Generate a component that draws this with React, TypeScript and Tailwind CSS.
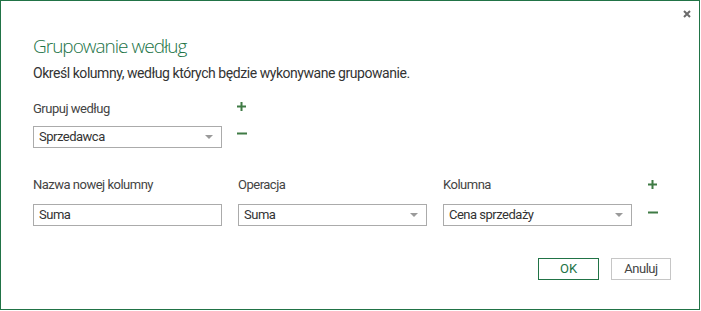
import { ReactNode } from "react"

const font = { fontFamily: 'Roboto, "Open Sans", sans-serif' }
const titleFont = { fontFamily: '"Open Sans", Roboto, sans-serif' }

const Plus = () => (
  <svg width="9" height="9" viewBox="0 0 9 9" className="block">
    <rect x="3.5" y="0" width="2" height="9" fill="#3f7b45" />
    <rect x="0" y="3.5" width="9" height="2" fill="#3f7b45" />
  </svg>
)

const Minus = () => (
  <svg width="10" height="9" viewBox="0 0 10 9" className="block">
    <rect x="0" y="3.5" width="10" height="2" fill="#3f7b45" />
  </svg>
)

const Arrow = () => (
  <svg width="8" height="4" viewBox="0 0 8 4" className="block">
    <path d="M0 0 L8 0 L4 4 Z" fill="#9a9a9a" />
  </svg>
)

const Label = ({ children }: { children: ReactNode }) => (
  <div className="h-[18px] text-[13px] leading-[18px] tracking-[-0.5px] text-[#444]">{children}</div>
)

const Select = ({ value }: { value: string }) => (
  <div className="flex h-[22px] w-[189px] items-center justify-between border border-[#ababab] pl-[5px] pr-[8px] text-[13px] tracking-[-0.5px] text-[#333]">
    <span>{value}</span>
    <Arrow />
  </div>
)

const Input = ({ value }: { value: string }) => (
  <div className="flex h-[22px] w-[189px] items-center border border-[#ababab] pl-[5px] text-[13px] tracking-[-0.5px] text-[#333]">
    {value}
  </div>
)

export default function App() {
  return (
    <div
      style={font}
      className="relative flex h-[310px] w-[700px] flex-col border border-[#217346] bg-white pl-[32px]"
    >
      <button className="absolute right-[8px] top-[9px] p-0">
        <svg width="8" height="8" viewBox="0 0 8 8" className="block">
          <path d="M1 1 L7 7 M7 1 L1 7" stroke="#6b6b6b" strokeWidth="2" />
        </svg>
      </button>

      <h1
        style={titleFont}
        className="mt-[32px] text-[19px] font-light leading-[27px] tracking-[-1px] text-[#217346]"
      >
        Grupowanie według
      </h1>
      <p className="mt-[3px] text-[14px] leading-[20px] tracking-[-0.45px] text-[#333]">
        Określ kolumny, według których będzie wykonywane grupowanie.
      </p>

      <div className="mt-[17px] flex">
        <div className="flex flex-col">
          <Label>Grupuj według</Label>
          <div className="mt-[8px]">
            <Select value="Sprzedawca" />
          </div>
        </div>
        <div className="ml-[15px] flex flex-col">
          <div className="mt-[2px]">
            <Plus />
          </div>
          <div className="mt-[18px]">
            <Minus />
          </div>
        </div>
      </div>

      <div className="mt-[28px] flex gap-[16px]">
        <div className="flex flex-col">
          <Label>Nazwa nowej kolumny</Label>
          <div className="mt-[10px]">
            <Input value="Suma" />
          </div>
        </div>
        <div className="flex flex-col">
          <Label>Operacja</Label>
          <div className="mt-[10px]">
            <Select value="Suma" />
          </div>
        </div>
        <div className="flex flex-col">
          <Label>Kolumna</Label>
          <div className="mt-[10px]">
            <Select value="Cena sprzedaży" />
          </div>
        </div>
        <div className="flex flex-col">
          <div className="mt-[4px]">
            <Plus />
          </div>
          <div className="mt-[19px]">
            <Minus />
          </div>
        </div>
      </div>

      <div className="mt-[32px] flex justify-end gap-[12px] pr-[28px]">
        <button className="h-[22px] w-[61px] border border-[#217346] text-[13px] text-[#217346]">
          OK
        </button>
        <button className="h-[22px] w-[60px] border border-[#c6c6c6] text-[13px] tracking-[-0.5px] text-[#444]">
          Anuluj
        </button>
      </div>
    </div>
  )
}
